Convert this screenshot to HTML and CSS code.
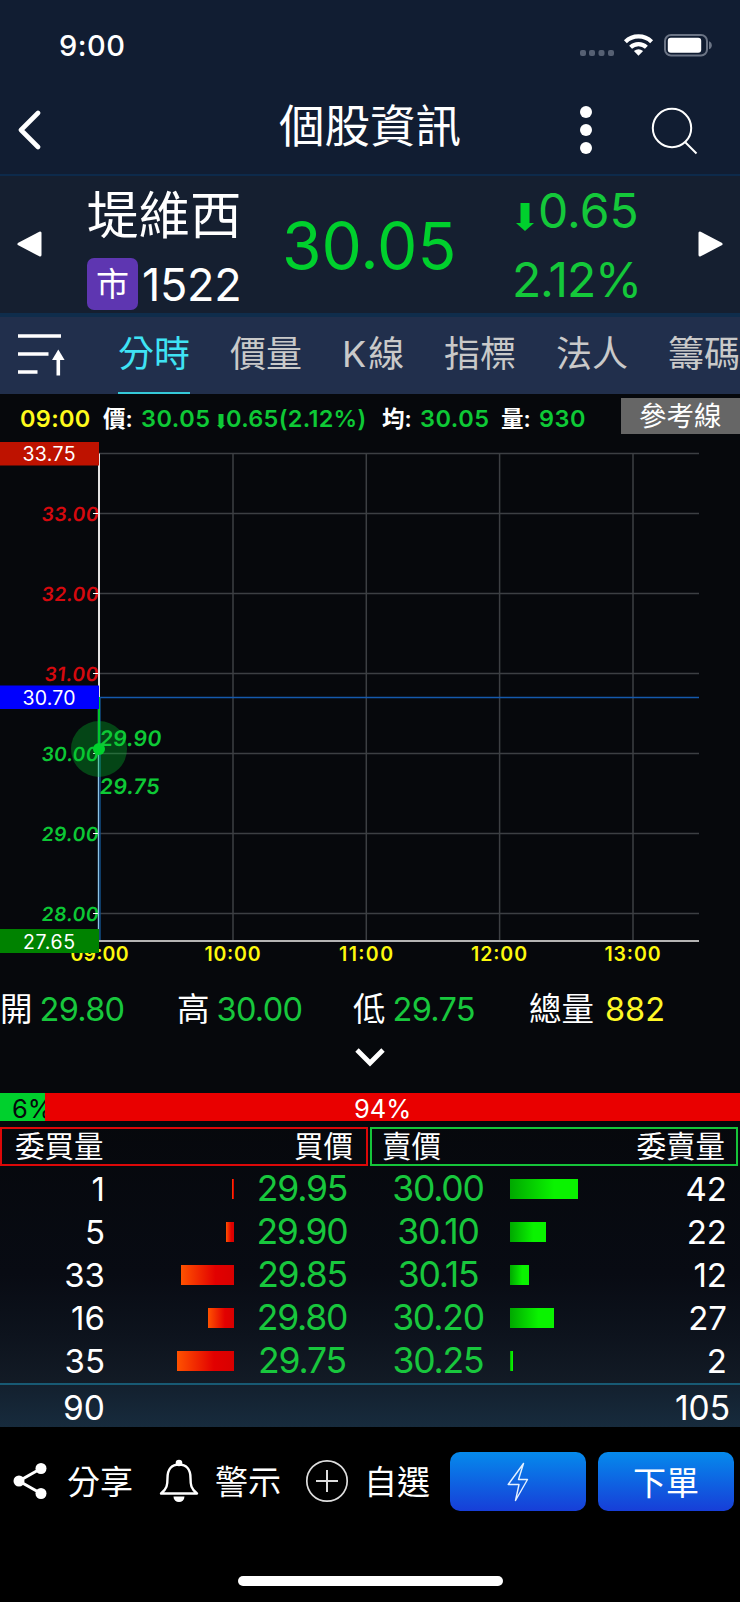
FILE: index.html
```html
<!DOCTYPE html>
<html lang="zh-Hant">
<head>
    <meta charset="UTF-8">
    <title>個股資訊</title>
    <link rel="stylesheet" href="styles.css">
</head>
<body>
<div class="top">
    <div class="status">
        <span class="clock">9:00</span>
        <svg class="signal" width="134" height="26" viewBox="0 0 134 26">
            <g fill="#566073">
                <rect x="0" y="17" width="6" height="6" rx="2"/>
                <rect x="9" y="17" width="6" height="6" rx="2"/>
                <rect x="18.5" y="17" width="6" height="6" rx="2"/>
                <rect x="28" y="17" width="6" height="6" rx="2"/>
            </g>
            <g fill="none" stroke="#fff" stroke-width="4.2">
                <path d="M45.400 8.700A19 19 0 0 1 71.600 8.700"/>
                <path d="M50.600 14.200A11.500 11.500 0 0 1 66.400 14.200"/>
            </g>
            <path fill="#fff" d="M58.500 22.700L53.900 18.100Q58.500 14.600 63.100 18.100z"/>
            <rect x="85" y="2" width="42" height="20.500" rx="6" fill="none" stroke="#6b7485" stroke-width="2"/>
            <rect x="87.800" y="4.800" width="33.400" height="15" rx="3" fill="#fff"/>
            <path fill="#6b7485" d="M129 8.200q2.800 1 2.800 4t-2.800 4z"/>
        </svg>
    </div>
    <div class="nav">
        <svg class="back" width="24" height="40" viewBox="0 0 24 40"><path d="M21 3L4 20L21 37" fill="none" stroke="#fff" stroke-width="4.600" stroke-linecap="round" stroke-linejoin="round"/></svg>
        <h1>個股資訊</h1>
        <svg class="more" width="12" height="48" viewBox="0 0 12 48" fill="#fff"><circle cx="6" cy="6" r="6"/><circle cx="6" cy="24" r="6"/><circle cx="6" cy="42" r="6"/></svg>
        <svg class="search" width="48" height="48" viewBox="0 0 48 48" fill="none" stroke="#fff" stroke-width="2"><circle cx="21" cy="21" r="19.200"/><path d="M34 35L45.500 46.500"/></svg>
    </div>
</div>

<div class="quote">
    <svg class="prev" width="26" height="26" viewBox="0 0 26 26"><path d="M2 13L23 2V24z" fill="#fff" stroke="#fff" stroke-width="3" stroke-linejoin="round"/></svg>
    <div class="stock">
        <div class="name">堤維西</div>
        <div class="code"><span class="badge">市</span><span>1522</span></div>
    </div>
    <div class="price">30.05</div>
    <div class="change">
        <div class="diff"><svg width="18" height="28" viewBox="0 0 18 28"><path d="M4.500 0h9v20H18L9 28L0 20h4.500z" fill="#00d02d"/></svg><span>0.65</span></div>
        <div class="percent">2.12%</div>
    </div>
    <svg class="next" width="26" height="26" viewBox="0 0 26 26"><path d="M24 13L3 2V24z" fill="#fff" stroke="#fff" stroke-width="3" stroke-linejoin="round"/></svg>
</div>

<div class="tabs">
    <svg class="sort" width="48" height="44" viewBox="0 0 48 44"><path d="M0 2h43M0 20h30.500M0 38h19.500M40.300 41.500V22" fill="none" stroke="#fff" stroke-width="3.600"/><path d="M34 26h12.600L40.300 15.500z" fill="#fff"/></svg>
    <span class="tab on">分時</span>
    <span class="tab">價量</span>
    <span class="tab k">K線</span>
    <span class="tab">指標</span>
    <span class="tab">法人</span>
    <span class="tab">籌碼</span>
</div>

<div class="info">
    <span class="time">09:00</span>
    <span class="label">價:</span>
    <span class="val">30.05</span>
    <svg class="down" width="8" height="15" viewBox="0 0 8 15"><path d="M1.500 0h5v11H8L4 15L0 11h1.500z" fill="#0ec936"/></svg>
    <span class="val chg">0.65(2.12%)</span>
    <span class="label">均:</span>
    <span class="val avg">30.05</span>
    <span class="label">量:</span>
    <span class="val">930</span>
    <span class="ref">參考線</span>
</div>

<svg class="chart" width="740" height="532" viewBox="0 438 740 532">
    <!-- 格線 -->
    <path class="grid" d="M99 453.500H699M99 513.500H699M99 593.500H699M99 673.500H699M99 753.500H699M99 833.500H699M99 913.500H699M233 453.500V941M366.300 453.500V941M499.600 453.500V941M633 453.500V941"/>
    <path d="M99 697.500H699" stroke="#1459ad" stroke-width="1.400"/>
    <!-- 價格刻度 -->
    <g class="scale up">
        <text transform="translate(41 520.700) skewX(-6)" textLength="57">33.00</text>
        <text transform="translate(41 600.700) skewX(-6)" textLength="57">32.00</text>
        <text transform="translate(44 680.700) skewX(-6)" textLength="54">31.00</text>
    </g>
    <g class="scale dn">
        <text transform="translate(41 760.700) skewX(-6)" textLength="57">30.00</text>
        <text transform="translate(41 840.700) skewX(-6)" textLength="57">29.00</text>
        <text transform="translate(41 920.700) skewX(-6)" textLength="57">28.00</text>
    </g>
    <path d="M93 513.500h6M93 593.500h6M93 673.500h6M93 753.500h6M93 833.500h6M93 913.500h6" stroke="#fff" stroke-width="1.200"/>
    <path d="M99 453.500V697" stroke="#e4e4e4" stroke-width="2"/>
    <path d="M98.500 697V941" stroke="#8cc4e8" stroke-width="1.400"/>
    <path d="M100 697V941" stroke="#14528e" stroke-width="1.400"/>
    <path d="M99 941H699" stroke="#b4b4b4" stroke-width="1.800"/>
    <path d="M99 697V749" stroke="#00c62d" stroke-width="2"/>
    <circle cx="99" cy="749" r="28" fill="#00c62d" fill-opacity=".32"/>
    <circle cx="99" cy="749" r="6" fill="#00d22d"/>
    <g class="mark">
        <text transform="translate(99 746.300) skewX(-6)" textLength="62">29.90</text>
        <text transform="translate(99 794.300) skewX(-6)" textLength="60">29.75</text>
    </g>
    <!-- 時間刻度 -->
    <g class="hour">
        <text x="70.500" y="960.500" textLength="58">09:00</text>
        <text x="204.500" y="960.500" textLength="56">10:00</text>
        <text x="339" y="960.500" textLength="54">11:00</text>
        <text x="471" y="960.500" textLength="56">12:00</text>
        <text x="604.500" y="960.500" textLength="56">13:00</text>
    </g>
    <rect x="0" y="442" width="99" height="23.500" fill="#be1200"/>
    <rect x="0" y="685.500" width="99" height="23.500" fill="#0000fe"/>
    <rect x="0" y="929" width="99" height="24" fill="#008200"/>
    <g class="limit">
        <text x="22.500" y="461.300" textLength="53">33.75</text>
        <text x="22.500" y="705" textLength="53">30.70</text>
        <text x="23" y="948.700" textLength="52">27.65</text>
    </g>
</svg>

<div class="stats">
    <div>開<b>29.80</b></div>
    <div>高<b>30.00</b></div>
    <div>低<b>29.75</b></div>
    <div>總量<b class="vol">882</b></div>
</div>
<div class="fold"><svg width="32" height="22" viewBox="0 0 32 22"><path d="M3 3L16 16L29 3" fill="none" stroke="#fff" stroke-width="4.800"/></svg></div>

<div class="ratio">
    <div class="sell" style="width:45px">6%</div>
    <div class="buy">94%</div>
</div>

<div class="depth">
    <div class="heads">
        <div class="head red"><span>委買量</span><span>買價</span></div>
        <div class="head green"><span>賣價</span><span>委賣量</span></div>
    </div>
    <div class="row">
        <span class="qty">1</span><span class="bid"><i style="width:2px"></i></span><span class="p">29.95</span>
        <span class="p">30.00</span><span class="ask"><i style="width:68px"></i></span><span class="qty">42</span>
    </div>
    <div class="row">
        <span class="qty">5</span><span class="bid"><i style="width:8px"></i></span><span class="p">29.90</span>
        <span class="p">30.10</span><span class="ask"><i style="width:36px"></i></span><span class="qty">22</span>
    </div>
    <div class="row">
        <span class="qty">33</span><span class="bid"><i style="width:53px"></i></span><span class="p">29.85</span>
        <span class="p">30.15</span><span class="ask"><i style="width:19px"></i></span><span class="qty">12</span>
    </div>
    <div class="row">
        <span class="qty">16</span><span class="bid"><i style="width:26px"></i></span><span class="p">29.80</span>
        <span class="p">30.20</span><span class="ask"><i style="width:44px"></i></span><span class="qty">27</span>
    </div>
    <div class="row">
        <span class="qty">35</span><span class="bid"><i style="width:57px"></i></span><span class="p">29.75</span>
        <span class="p">30.25</span><span class="ask"><i style="width:3px"></i></span><span class="qty">2</span>
    </div>
    <div class="total"><span>90</span><span>105</span></div>
</div>

<div class="bottom">
    <div class="actions">
        <div class="act share">
            <svg width="34" height="38" viewBox="0 0 34 38"><path d="M28 6.500L6 19L28 31.500" fill="none" stroke="#fff" stroke-width="3"/><g fill="#fff"><circle cx="28" cy="6.500" r="5.500"/><circle cx="6" cy="19" r="5.500"/><circle cx="28" cy="31.500" r="5.500"/></g></svg>
            <span>分享</span>
        </div>
        <div class="act bell">
            <svg width="40" height="44" viewBox="0 0 40 44"><path d="M2 34.500C8 30 8.500 26 8.500 19C8.500 10 13 5.500 20 5.500S31.500 10 31.500 19C31.500 26 32 30 38 34.500z" fill="none" stroke="#fff" stroke-width="2.400" stroke-linejoin="round"/><circle cx="20" cy="4" r="3.300" fill="#fff"/><path d="M14.500 37.500h11a5.500 5.500 0 0 1-11 0z" fill="#fff"/></svg>
            <span>警示</span>
        </div>
        <div class="act plus">
            <svg width="44" height="44" viewBox="0 0 44 44" fill="none" stroke="#ddd"><circle cx="22" cy="22" r="20.200" stroke-width="1.700"/><path d="M11 22h22M22 11v22" stroke-width="2"/></svg>
            <span>自選</span>
        </div>
        <div class="btn"><svg width="22" height="40" viewBox="0 0 22 40"><path d="M16.500 1.500L1.200 22.500H12L8.500 38.500L20.500 17.500H11.500z" fill="none" stroke="#e4f1ff" stroke-width="1.400" stroke-linejoin="round"/></svg></div>
        <div class="btn"><span>下單</span></div>
    </div>
    <div class="home"></div>
</div>
</body>
</html>
```
FILE: styles.css
```css
*{
    box-sizing: border-box;
}
body{
    margin: 0;
    width: 740px;
    height: 1602px;
    overflow: hidden;
    background: #06080c;
    color: #fff;
    font-family: Inter, "Noto Sans CJK TC", sans-serif;
    font-weight: 400;
    white-space: nowrap;
}
svg{
    display: block;
    flex: none;
}
.top{
    height: 176px;
    background: #111d32;
    border-bottom: 2px solid #0d2a4b;
}
.status{
    display: flex;
    height: 88px;
    padding: 0 26px 0 59px;
    justify-content: space-between;
}
.clock{
    font-size: 29px;
    font-weight: 500;
    line-height: 91px;
    letter-spacing: .5px;
}
.signal{
    margin: 33px 0 0 0;
}
.nav{
    display: flex;
    height: 86px;
    padding-left: 17px;
}
.back{
    margin-top: 22px;
}
.nav h1{
    width: 184px;
    margin: 0 0 0 238px;
    font-size: 45.500px;
    font-weight: 400;
    line-height: 77px;
}
.more{
    margin: 18px 0 0 117px;
}
.search{
    margin: 19px 0 0 59px;
}
.quote{
    display: flex;
    height: 141px;
    padding-left: 17px;
    background: #151f30;
    border-bottom: 4px solid #0f2d4c;
}
.prev,
.next{
    margin-top: 55px;
}
.next{
    margin-left: -1px;
}
.stock{
    width: 195px;
    margin-left: 44px;
}
.name{
    font-size: 51.500px;
    line-height: 79px;
    height: 82px;
}
.code{
    display: flex;
    align-items: center;
    height: 52px;
    gap: 4px;
    font-size: 45px;
    letter-spacing: -.300px;
}
.badge{
    width: 51px;
    height: 52px;
    border-radius: 7px;
    background: #5e36b1;
    font-size: 33px;
    line-height: 53px;
    text-align: center;
    letter-spacing: 0;
}
.price{
    width: 230px;
    color: #00d02d;
    font-size: 64px;
    line-height: 140px;
}
.change{
    width: 130px;
    color: #14c83a;
    font-size: 48px;
    margin-right: 56px;
}
.diff{
    display: flex;
    height: 68px;
    gap: 4px;
    padding-left: 4px;
    line-height: 70px;
}
.diff svg{
    margin-top: 27px;
}
.percent{
    line-height: 72px;
    letter-spacing: -1.200px;
}
.tabs{
    display: flex;
    height: 77px;
    padding-left: 17px;
    gap: 40px;
    background: #212f4c;
    overflow: hidden;
}
.sort{
    margin: 17px 12px 0 1px;
}
.tab{
    flex: none;
    width: 72px;
    font-size: 36px;
    line-height: 75px;
    color: #c9c9c9;
}
.tab.k{
    width: 62px;
    letter-spacing: 2px;
}
.tab.on{
    color: #3fe3f5;
    border-bottom: 2px solid #35c9d8;
}
.info{
    display: flex;
    height: 44px;
    padding-left: 20px;
    font-size: 23.500px;
    font-weight: 600;
    line-height: 50px;
}
.info span{
    flex: none;
}
.info .time{
    width: 83px;
    color: #fffb1c;
    letter-spacing: .3px;
}
.info .label{
    width: 38px;
    font-size: 22.500px;
}
.info .val{
    width: 76px;
    color: #0ec936;
    letter-spacing: .5px;
}
.info .chg{
    width: 156px;
    letter-spacing: .3px;
}
.info .avg{
    width: 81px;
}
.info .down{
    margin: 20px 1px 0 0;
}
.info .ref{
    width: 119px;
    height: 36px;
    margin: 4px 0 0 auto;
    background: #666;
    font-size: 27.500px;
    line-height: 36px;
    font-weight: 400;
    padding-left: 18px;
}
.grid{
    stroke: #3c3f43;
    stroke-width: 1.500;
}
.scale{
    font-size: 19.500px;
    font-weight: 600;
}
.up{
    fill: #d5090e;
}
.dn{
    fill: #0cc735;
}
.mark{
    fill: #0ec936;
    font-size: 21.500px;
    font-weight: 600;
}
.hour{
    fill: #fdf90c;
    font-size: 19.500px;
    font-weight: 600;
}
.limit{
    fill: #fff;
    font-size: 19.500px;
}
.stats{
    display: grid;
    grid-template-columns: 177px 176px 176px 211px;
    height: 74px;
    font-size: 32.500px;
    line-height: 80px;
}
.stats b{
    margin-left: 7px;
    font-weight: 400;
    letter-spacing: -.700px;
    color: #18c73d;
}
.stats .vol{
    margin-left: 11px;
    letter-spacing: 0;
    color: #fff826;
}
.fold{
    height: 49px;
    padding: 3px 0 0 354px;
}
.ratio{
    display: flex;
    height: 28px;
    font-size: 25.500px;
    line-height: 31px;
}
.sell{
    flex: none;
    padding-left: 12px;
    overflow: hidden;
    background: #00d02d;
    color: #06080c;
}
.buy{
    flex: 1;
    padding-left: 309px;
    background: #e90000;
}
.depth{
    height: 306px;
    padding-top: 6px;
    background: linear-gradient(#06080c 0%, #080b13 50%, #0d131d 70%, #141d28 90%);
}
.heads{
    display: flex;
    gap: 2px;
    height: 39px;
}
.head{
    display: flex;
    width: 368px;
    height: 39px;
    justify-content: space-between;
    border: 2px solid #dc0808;
    padding: 0 13px 0 13px;
    font-size: 29.500px;
    line-height: 35px;
}
.green{
    border-color: #16c43a;
    padding: 0 11px 0 10px;
}
.row{
    display: grid;
    grid-template-columns: 105px 129px 136px 136px 110px 111px;
    height: 43px;
    line-height: 46px;
}
.qty{
    font-size: 33px;
    text-align: right;
}
.p{
    color: #18c73d;
    font-size: 35.500px;
    text-align: center;
    letter-spacing: -1.200px;
}
.bid,
.ask{
    display: flex;
    align-items: center;
}
.bid{
    justify-content: flex-end;
}
.ask{
    padding-left: 4px;
}
.row i{
    height: 20px;
    background: linear-gradient(90deg, #ff5200, #e20000 65%, #d80000);
}
.row .ask i{
    background: linear-gradient(90deg, #00a800, #0af300 65%);
}
.total{
    display: flex;
    height: 44px;
    margin-top: 2px;
    justify-content: space-between;
    border-top: 2px solid #185a74;
    background: linear-gradient(#13202e, #172b3d);
    padding: 0 10px 0 63px;
    font-size: 33.500px;
    line-height: 46px;
}
.bottom{
    height: 176px;
    background: #000;
}
.actions{
    display: flex;
    height: 149px;
    padding: 25px 0 0 13px;
}
.act{
    display: flex;
    flex: none;
    height: 57px;
    align-items: center;
    font-size: 33px;
}
.act span,
.btn span{
    margin-top: -2px;
}
.share{
    width: 146px;
    gap: 20px;
}
.bell{
    width: 146px;
    gap: 16px;
}
.plus{
    width: 145px;
    gap: 15px;
}
.btn{
    display: flex;
    flex: none;
    width: 136px;
    height: 59px;
    margin-right: 12px;
    align-items: center;
    justify-content: center;
    border-radius: 10px;
    background: linear-gradient(#058aec, #173ed8);
    font-size: 33px;
}
.home{
    width: 265px;
    height: 10px;
    margin: 0 auto;
    border-radius: 5px;
    background: #fff;
}
```
